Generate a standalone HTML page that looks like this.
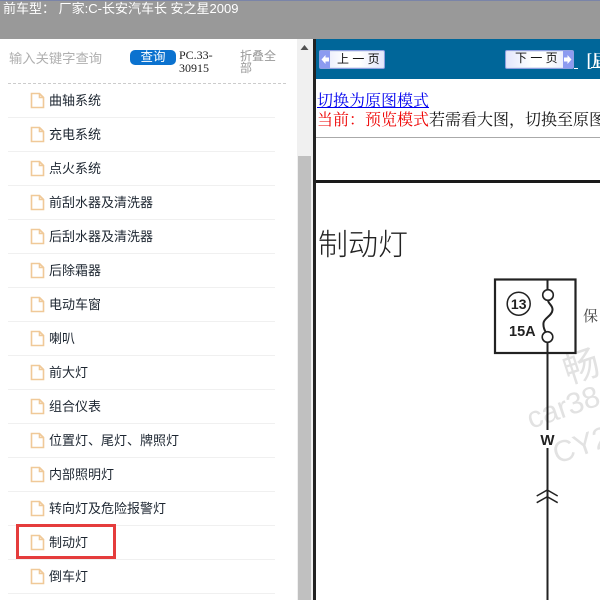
<!DOCTYPE html>
<html><head><meta charset="utf-8">
<style>
html,body{margin:0;padding:0;width:600px;height:600px;overflow:hidden;background:#fff}
body{position:relative;font-family:"Liberation Sans","Noto Sans CJK SC",sans-serif}
.a{position:absolute;white-space:nowrap}
.clip{position:absolute;overflow:hidden;white-space:nowrap}
.row{position:absolute;left:8px;width:267px;height:34px;border-bottom:1px solid #f0f0f0;box-sizing:border-box}
.row span{position:absolute;left:41px;top:8px;font-size:13px;line-height:18px;color:#1c2530;white-space:nowrap}
.row svg{position:absolute;left:22px;top:8px}
.btn{position:absolute;top:50px;height:19px;border:1px solid #8f9fe0;border-radius:2px;background:linear-gradient(90deg,#e3e6fb,#fff 40%,#fff 60%,#e3e6fb);box-sizing:border-box;font-size:12px;line-height:17px;color:#111;white-space:nowrap;box-shadow:0 0 0 1px #dfe6f5 inset}
.btn svg{position:absolute;top:0}
</style></head><body>
<div class="a" style="left:0;top:0;width:600px;height:39px;background:#999"></div>
<div class="a" style="left:0;top:0;width:600px;height:1px;background:#7a84a8"></div>
<div class="a" style="left:3px;top:0;font-size:13px;line-height:17px;color:#fff">前车型： 厂家:C-长安汽车长 安之星2009</div>

<div class="a" style="left:9px;top:50px;font-size:13.300px;line-height:18px;color:#b0b0b0">输入关键字查询</div>
<div class="a" style="left:130px;top:50px;width:46px;height:15px;background:#0b72cf;border-radius:5px;color:#fff;font-size:12.500px;line-height:15px;text-align:center">查询</div>
<div class="a" style="left:179px;top:49px;font-family:'Liberation Serif',serif;font-size:12px;line-height:13px;color:#222">PC.33-<br>30915</div>
<div class="a" style="left:240px;top:50px;font-size:12px;line-height:12px;color:#999">折叠全<br>部</div>
<div class="a" style="left:8px;top:83px;width:278px;border-top:1px dashed #ccc"></div>

<div class="row" style="top:84px"><svg width="15" height="17" viewBox="0 0 15 17"><path d="M1.500 1.500H9.500L13.500 5.500V15.500H1.500Z M9.500 1.500V5.500H13.500" fill="#fff" stroke="#f0c998" stroke-width="1.600"/></svg><span>曲轴系统</span></div>
<div class="row" style="top:118px"><svg width="15" height="17" viewBox="0 0 15 17"><path d="M1.500 1.500H9.500L13.500 5.500V15.500H1.500Z M9.500 1.500V5.500H13.500" fill="#fff" stroke="#f0c998" stroke-width="1.600"/></svg><span>充电系统</span></div>
<div class="row" style="top:152px"><svg width="15" height="17" viewBox="0 0 15 17"><path d="M1.500 1.500H9.500L13.500 5.500V15.500H1.500Z M9.500 1.500V5.500H13.500" fill="#fff" stroke="#f0c998" stroke-width="1.600"/></svg><span>点火系统</span></div>
<div class="row" style="top:186px"><svg width="15" height="17" viewBox="0 0 15 17"><path d="M1.500 1.500H9.500L13.500 5.500V15.500H1.500Z M9.500 1.500V5.500H13.500" fill="#fff" stroke="#f0c998" stroke-width="1.600"/></svg><span>前刮水器及清洗器</span></div>
<div class="row" style="top:220px"><svg width="15" height="17" viewBox="0 0 15 17"><path d="M1.500 1.500H9.500L13.500 5.500V15.500H1.500Z M9.500 1.500V5.500H13.500" fill="#fff" stroke="#f0c998" stroke-width="1.600"/></svg><span>后刮水器及清洗器</span></div>
<div class="row" style="top:254px"><svg width="15" height="17" viewBox="0 0 15 17"><path d="M1.500 1.500H9.500L13.500 5.500V15.500H1.500Z M9.500 1.500V5.500H13.500" fill="#fff" stroke="#f0c998" stroke-width="1.600"/></svg><span>后除霜器</span></div>
<div class="row" style="top:288px"><svg width="15" height="17" viewBox="0 0 15 17"><path d="M1.500 1.500H9.500L13.500 5.500V15.500H1.500Z M9.500 1.500V5.500H13.500" fill="#fff" stroke="#f0c998" stroke-width="1.600"/></svg><span>电动车窗</span></div>
<div class="row" style="top:322px"><svg width="15" height="17" viewBox="0 0 15 17"><path d="M1.500 1.500H9.500L13.500 5.500V15.500H1.500Z M9.500 1.500V5.500H13.500" fill="#fff" stroke="#f0c998" stroke-width="1.600"/></svg><span>喇叭</span></div>
<div class="row" style="top:356px"><svg width="15" height="17" viewBox="0 0 15 17"><path d="M1.500 1.500H9.500L13.500 5.500V15.500H1.500Z M9.500 1.500V5.500H13.500" fill="#fff" stroke="#f0c998" stroke-width="1.600"/></svg><span>前大灯</span></div>
<div class="row" style="top:390px"><svg width="15" height="17" viewBox="0 0 15 17"><path d="M1.500 1.500H9.500L13.500 5.500V15.500H1.500Z M9.500 1.500V5.500H13.500" fill="#fff" stroke="#f0c998" stroke-width="1.600"/></svg><span>组合仪表</span></div>
<div class="row" style="top:424px"><svg width="15" height="17" viewBox="0 0 15 17"><path d="M1.500 1.500H9.500L13.500 5.500V15.500H1.500Z M9.500 1.500V5.500H13.500" fill="#fff" stroke="#f0c998" stroke-width="1.600"/></svg><span>位置灯、尾灯、牌照灯</span></div>
<div class="row" style="top:458px"><svg width="15" height="17" viewBox="0 0 15 17"><path d="M1.500 1.500H9.500L13.500 5.500V15.500H1.500Z M9.500 1.500V5.500H13.500" fill="#fff" stroke="#f0c998" stroke-width="1.600"/></svg><span>内部照明灯</span></div>
<div class="row" style="top:492px"><svg width="15" height="17" viewBox="0 0 15 17"><path d="M1.500 1.500H9.500L13.500 5.500V15.500H1.500Z M9.500 1.500V5.500H13.500" fill="#fff" stroke="#f0c998" stroke-width="1.600"/></svg><span>转向灯及危险报警灯</span></div>
<div class="row" style="top:526px"><svg width="15" height="17" viewBox="0 0 15 17"><path d="M1.500 1.500H9.500L13.500 5.500V15.500H1.500Z M9.500 1.500V5.500H13.500" fill="#fff" stroke="#f0c998" stroke-width="1.600"/></svg><span>制动灯</span></div>
<div class="row" style="top:560px"><svg width="15" height="17" viewBox="0 0 15 17"><path d="M1.500 1.500H9.500L13.500 5.500V15.500H1.500Z M9.500 1.500V5.500H13.500" fill="#fff" stroke="#f0c998" stroke-width="1.600"/></svg><span>倒车灯</span></div>
<div class="a" style="left:16px;top:524px;width:100px;height:35px;border:3px solid #e53c3c;box-sizing:border-box"></div>

<div class="a" style="left:297px;top:39px;width:16px;height:561px;background:#f0f0f0"></div>
<div class="a" style="left:298px;top:156px;width:13px;height:444px;background:#c0c0c0"></div>
<svg class="a" style="left:299px;top:44px" width="11" height="7"><path d="M5.500 1L9.500 6H1.500Z" fill="#505050"/></svg>
<div class="a" style="left:313px;top:39px;width:3px;height:561px;background:#222"></div>

<div class="a" style="left:316px;top:39px;width:284px;height:40px;background:#006699"></div>
<div class="btn" style="left:319px;width:66px"><svg style="left:0" width="11" height="17"><rect width="10" height="17" fill="#8c9bf0"/><path d="M1.500 8.500L5.500 4V6.500H9V10.500H5.500V13Z" fill="#fff"/></svg><span style="position:absolute;left:17px;top:0">上 一 页</span></div>
<div class="btn" style="left:505px;width:69px"><span style="position:absolute;left:9px;top:-1px">下 一 页</span><svg style="right:0" width="11" height="17"><rect x="1" width="10" height="17" fill="#8c9bf0"/><path d="M9.500 8.500L5.500 4V6.500H2V10.500H5.500V13Z" fill="#fff"/></svg></div>
<div class="a" style="left:574px;top:68px;width:4px;height:1px;background:#fff"></div>
<div class="clip" style="left:586px;top:50px;width:14px;height:22px;font-family:'Noto Serif CJK SC',serif;font-size:16px;line-height:19px;color:#fff;font-weight:700;text-decoration:underline">[届</div>

<div class="a" style="left:317px;top:91px;font-family:'Noto Serif CJK SC',serif;font-size:16px;line-height:18px;color:#00e;text-decoration:underline">切换为原图模式</div>
<div class="clip" style="left:317px;top:110px;width:283px;height:20px;font-family:'Noto Serif CJK SC',serif;font-size:16px;line-height:18px;color:#111"><span style="color:#e00">当前：预览模式</span>若需看大图，切换至原图</div>
<div class="a" style="left:316px;top:137px;width:284px;height:1px;background:#aaa"></div>
<div class="a" style="left:316px;top:180px;width:284px;height:3px;background:#1a1a1a"></div>

<div class="a" style="left:318px;top:223px;font-family:'Noto Sans CJK SC',sans-serif;font-weight:300;font-size:30px;line-height:38px;color:#222">制动灯</div>

<svg class="a" style="left:316px;top:183px" width="284" height="417" viewBox="316 183 284 417">
<text x="568" y="384" font-family="Noto Sans CJK SC,sans-serif" font-size="36" fill="#e2e2e2" transform="rotate(-18 568 384)">畅</text>
<text x="531" y="429" font-family="Liberation Sans,sans-serif" font-size="30" fill="#e2e2e2" transform="rotate(-19 531 429)">car38</text>
<text x="557" y="464" font-family="Liberation Sans,sans-serif" font-size="30" fill="#e2e2e2" transform="rotate(-19 557 464)">CY2</text>
<rect x="495" y="279.500" width="80.500" height="73.500" fill="none" stroke="#222" stroke-width="2.200"/>
<path d="M547.500 280V290M548 300C548 304 553 305 552.500 310C552 316 544 318 543.500 323C543 328 545 331 546 332.500M547.500 342V430M547.500 448V600" fill="none" stroke="#222" stroke-width="2"/>
<circle cx="548" cy="295" r="5.300" fill="#fff" stroke="#222" stroke-width="1.600"/>
<circle cx="547.500" cy="337" r="5.300" fill="#fff" stroke="#222" stroke-width="1.600"/>
<circle cx="518.700" cy="303.700" r="11.500" fill="#fff" stroke="#222" stroke-width="1.500"/>
<text x="518.700" y="309" text-anchor="middle" font-family="Liberation Sans,sans-serif" font-size="14" font-weight="700" fill="#222">13</text>
<text x="509" y="336" font-family="Liberation Sans,sans-serif" font-size="14.500" font-weight="700" fill="#222">15A</text>
<text x="583" y="321" font-family="Noto Serif CJK SC,serif" font-size="15" fill="#444">保</text>
<text x="547.500" y="445" text-anchor="middle" font-family="Liberation Sans,sans-serif" font-size="15" font-weight="700" fill="#222">W</text>
<path d="M536.700 496L547.300 490L557.700 496M536.700 502.700L547.300 496.700L557.700 502.700" fill="none" stroke="#222" stroke-width="1.500"/>
</svg>
</body></html>
